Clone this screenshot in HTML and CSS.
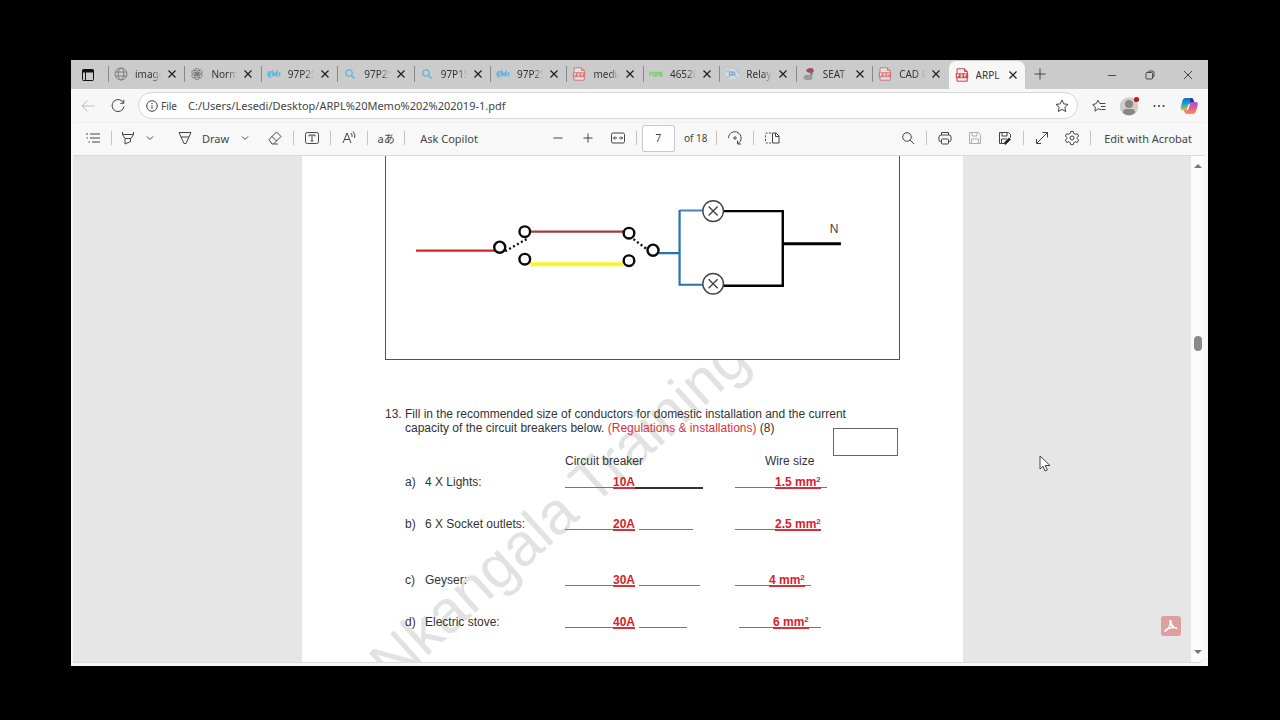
FILE: index.html
```
<!DOCTYPE html>
<html lang="en">
<head>
<meta charset="utf-8">
<title>ARPL Memo 2 2019-1.pdf</title>
<link rel="stylesheet" href="styles.css">
</head>
<body>
<svg class="sprite" aria-hidden="true">
  <symbol id="x" viewBox="0 0 10 10"><path d="M1.500 1.500l7 7M8.500 1.500l-7 7"/></symbol>
  <symbol id="chev" viewBox="0 0 10 10"><path d="M2 3.500l3 3 3-3"/></symbol>
  <symbol id="em" viewBox="0 0 14 14"><path d="M5 5H2L1 7l1 2.500h2.500M1.500 7.200H4.500M6 9.500V5l2 3 2-3v4.500M12.500 5v4.500" stroke="#62b4dc" stroke-width="1.600"/></symbol>
  <symbol id="mag" viewBox="0 0 14 14"><circle cx="6" cy="6" r="3.200" stroke="#6cb0dc" stroke-width="1.300"/><path d="M8.500 8.500l3 3" stroke="#6cb0dc" stroke-width="1.500"/></symbol>
  <symbol id="pdf" viewBox="0 0 14 14"><path d="M2 .8h7.500L12.300 3.500v9.700H2z" fill="#f5efef" stroke="#c9474a" stroke-width="1"/><path d="M9.500.8v2.700h2.800" stroke="#c9474a"/><path d="M.8 5.200h12.400v5H.8z" fill="#dc3e42" stroke="none"/><path d="M2.500 9.300V6.200h1.200v1.500H2.500M6 6.200v3h.8q1.200-1.500 0-3zM9.700 9.300V6.200h1.800M9.700 7.700h1.500" stroke="#fff" stroke-width=".8"/></symbol>
</svg>
<main class="window">
  <header class="tabbar">
    <button class="tab-actions" aria-label="Tab actions"><svg class="i14" viewBox="0 0 14 14"><rect x="1.500" y="1.500" width="11" height="11" rx="1" stroke="#111"/><path d="M1.500 3h11" stroke="#111" stroke-width="3"/><path d="M4.500 3v9.500" stroke="#111"/></svg></button>
    <nav class="tabs" aria-label="Tabs">
      <div class="tab"><svg class="fav" viewBox="0 0 14 14"><g stroke="#777" stroke-width=".9"><circle cx="7" cy="7" r="6"/><ellipse cx="7" cy="7" rx="2.800" ry="6"/><path d="M1.500 5h11M1.500 9h11"/></g></svg><button class="name">images</button><button class="close" aria-label="Close"><svg class="i10"><use href="#x"/></svg></button></div>
      <div class="tab"><svg class="fav" viewBox="0 0 14 14"><g stroke="#777" stroke-width=".8"><ellipse cx="7" cy="4.500" rx="2.500" ry="3.200"/><ellipse cx="7" cy="4.500" rx="2.500" ry="3.200" transform="rotate(60 7 7)"/><ellipse cx="7" cy="4.500" rx="2.500" ry="3.200" transform="rotate(120 7 7)"/><ellipse cx="7" cy="4.500" rx="2.500" ry="3.200" transform="rotate(180 7 7)"/><ellipse cx="7" cy="4.500" rx="2.500" ry="3.200" transform="rotate(240 7 7)"/><ellipse cx="7" cy="4.500" rx="2.500" ry="3.200" transform="rotate(300 7 7)"/></g></svg><button class="name">Norm</button><button class="close" aria-label="Close"><svg class="i10"><use href="#x"/></svg></button></div>
      <div class="tab"><svg class="fav"><use href="#em"/></svg><button class="name">97P2S</button><button class="close" aria-label="Close"><svg class="i10"><use href="#x"/></svg></button></div>
      <div class="tab"><svg class="fav"><use href="#mag"/></svg><button class="name">97P2S</button><button class="close" aria-label="Close"><svg class="i10"><use href="#x"/></svg></button></div>
      <div class="tab"><svg class="fav"><use href="#mag"/></svg><button class="name">97P1S</button><button class="close" aria-label="Close"><svg class="i10"><use href="#x"/></svg></button></div>
      <div class="tab"><svg class="fav"><use href="#em"/></svg><button class="name">97P2S</button><button class="close" aria-label="Close"><svg class="i10"><use href="#x"/></svg></button></div>
      <div class="tab"><svg class="fav dim"><use href="#pdf"/></svg><button class="name">media</button><button class="close" aria-label="Close"><svg class="i10"><use href="#x"/></svg></button></div>
      <div class="tab"><svg class="fav" viewBox="0 0 14 14"><path d="M1 9V5.500h2M4 9V5.500h2.500V9H4M7.500 9V5.500H10V9M11 9h2V7.300h-2V5.500h2" stroke="#83cf78" stroke-width="1.500"/></svg><button class="name">46528</button><button class="close" aria-label="Close"><svg class="i10"><use href="#x"/></svg></button></div>
      <div class="tab"><svg class="fav" viewBox="0 0 14 14"><rect x=".5" y="2" width="13" height="10" fill="#d3dce6" stroke="none"/><path d="M1 3l2 2 1-2M10 3h3v3M1 10.500h3l1-3M9 7l3 4" stroke="#8fb2dd"/><circle cx="6" cy="6.500" r="1.800" stroke="#7794bd"/><circle cx="8.500" cy="6.500" r="1.600" stroke="#7794bd"/></svg><button class="name">Relay:</button><button class="close" aria-label="Close"><svg class="i10"><use href="#x"/></svg></button></div>
      <div class="tab"><svg class="fav" viewBox="0 0 14 14"><g stroke="none"><path d="M4 3q3-3 7-1.500l1 3-4 1.500-3-1z" fill="#a34b5c"/><path d="M8 5l3-.5-.5 3.500-2 .5z" fill="#777"/><ellipse cx="6" cy="10.500" rx="4.500" ry="2.800" fill="#999"/></g></svg><button class="name">SEAT</button><button class="close" aria-label="Close"><svg class="i10"><use href="#x"/></svg></button></div>
      <div class="tab"><svg class="fav dim"><use href="#pdf"/></svg><button class="name">CAD D</button><button class="close" aria-label="Close"><svg class="i10"><use href="#x"/></svg></button></div>
      <div class="tab active"><svg class="fav"><use href="#pdf"/></svg><button class="name">ARPL</button><button class="close" aria-label="Close"><svg class="i10"><use href="#x"/></svg></button></div>
    </nav>
    <button class="ico" aria-label="New tab"><svg class="i14" viewBox="0 0 14 14"><path d="M7 1.500v11M1.500 7h11"/></svg></button>
    <div class="controls">
      <button aria-label="Minimize"><svg class="i10" viewBox="0 0 10 10"><path d="M1 5.500h8"/></svg></button>
      <button aria-label="Restore"><svg class="i10" viewBox="0 0 10 10"><rect x="1" y="2.500" width="6.500" height="6.500" rx="1"/><path d="M3 2.500Q3 1 4.500 1H7q2 0 2 2v3q0 1-1.300 1.300"/></svg></button>
      <button aria-label="Close window"><svg class="i10" viewBox="0 0 10 10"><path d="M1 1l8 8M9 1l-8 8"/></svg></button>
    </div>
  </header>
  <div class="addressbar">
    <button class="ico" aria-label="Back"><svg class="i14" viewBox="0 0 14 14"><path d="M13.500 7H1M6.500 1.500L1 7l5.500 5.500" stroke="#bbb"/></svg></button>
    <button class="ico" aria-label="Refresh"><svg class="i14" viewBox="0 0 14 14"><path d="M12.500 4A6 6 0 1 0 13 7.500M12.800.8v3.500H9.300"/></svg></button>
    <label class="url">
      <svg class="i12" viewBox="0 0 12 12"><circle cx="6" cy="6" r="5.300"/><path d="M6 5.300v3.500M6 3v1.200"/></svg>
      <span>File</span>
      <input type="text" value="C:/Users/Lesedi/Desktop/ARPL%20Memo%202%202019-1.pdf">
      <button class="ico" aria-label="Add favourite"><svg class="i14" viewBox="0 0 14 14"><path d="M7 1l1.800 3.900 4.200.5-3.100 2.900.8 4.200L7 10.400l-3.700 2.100.8-4.200L1 5.400l4.200-.5z"/></svg></button>
    </label>
    <button class="ico" aria-label="Favourites"><svg class="i14" viewBox="0 0 14 14"><path d="M9 10.700L6 9.800 3 12.200l.3-3.900L.8 5.500l3.400-.8L6 1.200l1.800 3.300h5.700M9 7.500h4.500M9.500 10.500h4"/></svg></button>
    <button class="ico" aria-label="Profile"><svg class="i20" viewBox="0 0 20 20"><g stroke="none"><circle cx="10" cy="10.500" r="9.300" fill="#cfcdcb"/><circle cx="10" cy="8" r="4" fill="#898785"/><path d="M4 17q0-4 3-4h6q3 0 3 4-6 4.500-12 0z" fill="#898785"/><circle cx="17.500" cy="3.500" r="2.600" fill="#c4151c"/></g></svg></button>
    <button class="ico" aria-label="More"><svg class="i14" viewBox="0 0 14 14"><g fill="#333" stroke="none"><circle cx="2.500" cy="7" r="1"/><circle cx="7" cy="7" r="1"/><circle cx="11.500" cy="7" r="1"/></g></svg></button>
    <button class="ico" aria-label="Copilot"><svg class="i20" viewBox="0 0 20 20"><defs><linearGradient id="cb" x2="0" y2="1"><stop stop-color="#1569d8"/><stop offset=".5" stop-color="#21a3c4"/><stop offset="1" stop-color="#dec83c"/></linearGradient><linearGradient id="cp" x2="0" y2="1"><stop stop-color="#9a58e5"/><stop offset=".5" stop-color="#ec5790"/><stop offset="1" stop-color="#f7944a"/></linearGradient></defs><g stroke="none"><path d="M6 2h6q2 0 2.500 2L15 6h-2q-1.500 0-2 2l-1.500 5q-.5 1.500-2 1.500H4q-3 0-2.300-3L3.500 4.500Q4.200 2 6 2z" fill="url(#cb)"/><path d="M14 18H8q-2 0-2.500-2L5 14h2.500q1.500 0 2-1.500L11 7.500Q11.500 6 13 6h3.500q3 0 2.200 3l-1.800 6.500Q16 18 14 18z" fill="url(#cp)"/><path d="M11.500 2Q14 2 14.500 4l.5 2h-2q-1.500 0-2 2z" fill="#173d8c"/><path d="M11 7.500L9.500 12.700q-.5 1.800-2 1.800l1.500-5Q9.500 7.500 11 7.500z" fill="#f7f7f7"/></g></svg></button>
  </div>
  <div class="toolbar">
    <div class="group left">
      <button class="ico" aria-label="Contents"><svg class="i16" viewBox="0 0 16 16"><path d="M5 4h10M5 8h10M7 12h8M1 4h2M1.500 8h1.500M3.500 12H5"/></svg></button><i></i>
      <button class="ico marker" aria-label="Highlight"><svg class="i16" viewBox="0 0 16 16"><path d="M2.500 2v2.500l2.500 4h6l2.500-4V2M2.500 4.500h11M5 8.500V14l5.500-2.500v-3"/></svg></button>
      <button class="more" aria-label="Highlight options"><svg class="i10"><use href="#chev"/></svg></button>
      <button class="draw"><svg class="i16" viewBox="0 0 16 16"><path d="M2 2.500h12L9 13.500H7zM4 7h8"/></svg>Draw</button>
      <button class="more" aria-label="Draw options"><svg class="i10"><use href="#chev"/></svg></button>
      <button class="ico eraser" aria-label="Erase"><svg class="i16" viewBox="0 0 16 16"><path d="M2 9.500L9.500 2l4.500 4.500-7.500 7.500H5zM5 6.500l4.500 4.500M6.500 14H11"/></svg></button><i></i>
      <button class="ico" aria-label="Add text"><svg class="i16" viewBox="0 0 16 16"><rect x="1.500" y="2.500" width="13" height="11" rx="2"/><path d="M5 6.500V5h6v1.500M8 5v6M6.500 11h3"/></svg></button><i></i>
      <button class="ico" aria-label="Read aloud"><svg class="i16" viewBox="0 0 16 16"><path d="M2 13L6 3l4 10M3.500 9.500h5M10 3q1.500 1.500 1 4M12 1.500q3 3 1.500 6.500"/></svg></button><i></i>
      <button class="ico lang" aria-label="Translate">aあ</button><i></i>
      <button class="text">Ask Copilot</button>
    </div>
    <div class="group">
      <button class="ico" aria-label="Zoom out"><svg class="i14" viewBox="0 0 14 14"><path d="M2.500 7h9"/></svg></button>
      <button class="ico" aria-label="Zoom in"><svg class="i14" viewBox="0 0 14 14"><path d="M7 2.500v9M2.500 7h9"/></svg></button>
      <button class="ico" aria-label="Fit to width"><svg class="i16" viewBox="0 0 16 16"><rect x="1.500" y="3" width="13" height="10" rx="1.500"/><path d="M3.500 8h3.500M9 8h3.500M5 6.500L3.500 8 5 9.500M11 6.500L12.500 8 11 9.500"/></svg></button><i></i>
      <input class="pageno" type="text" value="7" aria-label="Page"><span class="of">of 18</span><i></i>
      <button class="ico" aria-label="Rotate"><svg class="i16" viewBox="0 0 16 16"><path d="M1.500 8a6.300 6.300 0 1 1 9.500 5.500M10.500 10.500V14H14"/><circle cx="8" cy="8" r="1.200"/></svg></button><i></i>
      <button class="ico" aria-label="Page view"><svg class="i16" viewBox="0 0 16 16"><path d="M8.500 3h3.500l3 3v7H8.500zM11.500 3v3.500H15"/><path d="M7 3H3Q1.500 3 1.500 4.500v7Q1.500 13 3 13h4" stroke-dasharray="2 1.500"/></svg></button>
    </div>
    <div class="group right">
      <button class="ico" aria-label="Find"><svg class="i14" viewBox="0 0 14 14"><circle cx="6" cy="6" r="4.300"/><path d="M9 9l4 4"/></svg></button><i></i>
      <button class="ico" aria-label="Print"><svg class="i14" viewBox="0 0 14 14"><path d="M3.500 4V1.500h7V4M3.500 10.500h-1Q1 10.500 1 9V6q0-2 2-2h8q2 0 2 2v3q0 1.500-1.500 1.500h-1"/><rect x="3.500" y="8" width="7" height="5" rx="1"/></svg></button>
      <button class="ico faint" aria-label="Save"><svg class="i14" viewBox="0 0 14 14"><path d="M1.500 1.500h9l2 2v9h-11zM4 1.500V5h5V1.500M3.500 12.500V8h7v4.500"/></svg></button>
      <button class="ico" aria-label="Save as"><svg class="i14" viewBox="0 0 14 14"><path d="M6 12.500H1.500v-11h9l2 2v3M4 1.500V5h5V1.500M3.500 12.500V8H9"/><path d="M6.500 13l5.500-5.500" stroke="#222" stroke-width="2.500"/></svg></button><i></i>
      <button class="ico" aria-label="Full screen"><svg class="i14" viewBox="0 0 14 14"><path d="M2 12L12.500 1.500M7.500 1.500h5v5M1.500 8v4.500h4.500"/></svg></button>
      <button class="ico" aria-label="Settings"><svg class="i16" viewBox="0 0 16 16"><path d="M6.700 1.500h2.600l.5 2 1.500.8 2-.6 1.300 2.300L13.200 7.500v1.200l1.400 1.400-1.300 2.300-2-.6-1.500.9-.5 1.900H6.700l-.5-1.900-1.500-.9-2 .6-1.300-2.300 1.400-1.400V7.500L1.400 6l1.300-2.300 2 .6 1.500-.8z"/><circle cx="8" cy="8" r="2"/></svg></button><i></i>
      <button class="text">Edit with Acrobat</button>
    </div>
  </div>
  <section class="viewer">
    <div class="canvas">
      <article class="page">
        <svg class="watermark" viewBox="0 0 661 507"><text transform="translate(91 531) rotate(-42)">Nkangala Training</text></svg>
        <figure class="circuit">
          <svg viewBox="0 0 512 203">
            <path d="M30 94.500h80" stroke="#d42428" stroke-width="2.200"/>
            <path d="M144 75.500h93" stroke="#a23a3e" stroke-width="2.200"/>
            <path d="M144 108h93" stroke="#f6f62c" stroke-width="4"/>
            <path d="M119 95l23-13M247 83l16 12" stroke="#111" stroke-width="2.400" stroke-dasharray="2 2.500"/>
            <path d="M293 54.500h23" stroke="#4c80b8" stroke-width="2"/>
            <path d="M272 97h21M293 54v74.500h23" stroke="#2872ae" stroke-width="2.200"/>
            <path d="M336 55h60v74.500h-60" stroke="#000" stroke-width="2.400"/><path d="M396 87.500h58" stroke="#000" stroke-width="3"/>
            <g fill="#fff" stroke="#0a0a0a" stroke-width="2.400"><circle cx="113.500" cy="91" r="5.500"/><circle cx="138.500" cy="75.500" r="5.300"/><circle cx="138.500" cy="103" r="5.300"/><circle cx="242.500" cy="77" r="5.300"/><circle cx="242.500" cy="104.500" r="5.300"/><circle cx="266.500" cy="94" r="5.500"/></g>
            <g fill="#fff" stroke="#444" stroke-width="1.400"><circle cx="326.500" cy="55" r="10.300"/><circle cx="326.500" cy="127.500" r="10.300"/><path d="M322 50.500l9 9M331 50.500l-9 9M322 123l9 9M331 123l-9 9"/></g>
            <text x="443" y="77">N</text>
          </svg>
        </figure>
        <section class="question">
          <span class="num">13.</span>
          <p>Fill in the recommended size of conductors for domestic installation and the current capacity of the circuit breakers below. <em>(Regulations &amp; installations)</em> (8)</p>
          <span class="score"></span>
        </section>
        <table class="answers">
          <thead><tr><th></th><th></th><th>Circuit breaker</th><th class="wire">Wire size</th></tr></thead>
          <tbody>
            <tr><td>a)</td><td>4 X Lights:</td><td><div class="blank"><u class="w48"></u><b>10A</b><u class="w68 dark"></u></div></td><td><div class="blank"><u class="w40"></u><b>1.5 mm<sup>2</sup></b><u class="w6"></u></div></td></tr>
            <tr class="tall"><td>b)</td><td>6 X Socket outlets:</td><td><div class="blank"><u class="w48"></u><b>20A</b><u class="w54 gap"></u></div></td><td><div class="blank"><u class="w40"></u><b>2.5 mm<sup>2</sup></b></div></td></tr>
            <tr><td>c)</td><td>Geyser:</td><td><div class="blank"><u class="w48"></u><b>30A</b><u class="w61 gap"></u></div></td><td><div class="blank"><u class="w34"></u><b>4 mm<sup>2</sup></b><u class="w6"></u></div></td></tr>
            <tr><td>d)</td><td>Electric stove:</td><td><div class="blank"><u class="w48"></u><b>40A</b><u class="w48 gap"></u></div></td><td><div class="blank shift"><u class="w34"></u><b>6 mm<sup>2</sup></b><u class="w12"></u></div></td></tr>
          </tbody>
        </table>
      </article>
      <button class="acrobat" aria-label="Open in Acrobat"><svg class="i20" viewBox="0 0 20 20"><path d="M4 15.500q4.500-2.500 6-11M4 15.500q-.5-2 4-3.200 5-1.300 8-.3M10 4.500q-1 4.500 6 8.500M10 4.500q-1-.5-1 1 0 4 4 6.500" stroke="#fff" stroke-width="1.300"/></svg></button>
    </div>
    <div class="scrollbar"><svg class="arrow" viewBox="0 0 8 6"><path d="M4 1l4 4H0z"/></svg><span class="thumb"></span><svg class="arrow" viewBox="0 0 8 6"><path d="M0 1h8L4 5z"/></svg></div>
  </section>
  <svg class="pointer" viewBox="0 0 12 18"><path d="M1 1v13l3-2.700 2 4.700 2.300-1-2-4.500H11z" fill="#fff" stroke="#444"/></svg>
</main>
</body>
</html>
```
FILE: styles.css
```
* { box-sizing: border-box; }
body {
  margin: 0;
  height: 100vh;
  padding: 60px 72px 54px 71px;
  background: #000;
  font-family: "Noto Sans", "Open Sans", sans-serif;
  font-size: 11px;
  color: #444;
}
button, input { font: inherit; color: inherit; border: 0; padding: 0; background: none; }
svg { fill: none; stroke: #444; stroke-width: 1; flex: none; display: block; }
.sprite { position: absolute; width: 0; height: 0; }
.i10 { width: 10px; height: 10px; }
.i12 { width: 12px; height: 12px; }
.i14, .fav { width: 14px; height: 14px; }
.i16 { width: 16px; height: 16px; }
.i20 { width: 20px; height: 20px; }
.ico { width: 30px; height: 28px; flex: none; display: grid; place-items: center; }

.window { position: relative; height: 100%; display: flex; flex-direction: column; background: #f7f7f7; overflow: hidden; }

.tabbar { display: flex; height: 29px; flex: none; background: #cbcbcb; }
.tab-actions { width: 37px; padding-left: 10px; }
.tabs { flex: 1; display: grid; grid-template-columns: repeat(12, minmax(0, 1fr)); }
.tab { position: relative; display: flex; align-items: center; padding: 0 0 1px 6px; }
.tab::before { content: ""; position: absolute; left: 0; top: 6px; height: 16px; width: 1px; background: #888; }
.tab.active { background: #f7f7f7; border-radius: 7px 7px 0 0; margin-top: 1px; }
.tab.active::before { display: none; }
.dim { opacity: .6; }
.name {
  width: 26px;
  margin-left: 7px;
  overflow: hidden;
  text-align: left;
  white-space: nowrap;
  font-size: 10px;
  color: #333;
  -webkit-mask-image: linear-gradient(90deg, #000 65%, transparent);
  mask-image: linear-gradient(90deg, #000 65%, transparent);
}
.active .name { -webkit-mask-image: none; mask-image: none; }
.close { margin-left: 6px; }
.close svg { stroke: #222; stroke-width: 1.3; }
.controls { display: flex; margin-left: 38px; margin-right: 1px; }
.controls button { width: 38px; display: grid; place-items: center; }

.addressbar { display: flex; align-items: center; height: 33px; flex: none; padding: 0 4px 0 2px; }
.url { flex: 1; display: flex; align-items: center; height: 27px; margin: 0 6px 0 5px; padding-left: 7px; background: #fff; border: 1px solid #d6d6d6; border-radius: 14px; }
.url span { margin-left: 3px; font-size: 10px; }
.url input { flex: 1; margin-left: 11px; outline: 0; }

.toolbar { display: flex; align-items: center; height: 34px; flex: none; margin: 0 3px; padding: 0 13px 2px 4px; background: #f8f8f8; border-bottom: 1px solid #d8d8d8; border-top: 1px solid #efefef; }
.group { display: flex; align-items: center; }
.group i { width: 1px; height: 14px; margin: 0 3px; background: #c4c4c4; }
.left { margin-right: 65px; }
.right { margin-left: auto; }
.marker { width: 26px; }
.more { width: 18px; display: grid; place-items: center; }
.draw { display: flex; align-items: center; gap: 9px; margin-left: 18px; margin-right: 7px; }
.eraser { margin-left: 6px; }
.lang { font-size: 11px; font-family: "Noto Sans", "Noto Sans CJK JP", sans-serif; white-space: nowrap; }
.text { margin-left: 12px; white-space: nowrap; }
.right .text { margin-left: 10px; }
.pageno { width: 33px; height: 27px; margin-left: 2px; text-align: center; background: #fff; border: 1px solid #c8c8c8; border-radius: 2px; font-size: 10px; }
.of { margin: 0 6px 0 9px; font-size: 10px; }
.faint { opacity: .4; }

.viewer { flex: 1; min-height: 0; display: flex; margin: 0 4px 3px 2px; border-bottom: 1px solid #ddd; border-radius: 0 0 7px 0; overflow: hidden; }
.canvas { position: relative; flex: 1; display: flex; justify-content: center; padding-left: 1px; background: #e6e6e6; overflow: hidden; }
.page { position: relative; width: 100%; max-width: 661px; padding: 0 63px 0 83px; background: #fff; font-family: "Liberation Sans", Arial, sans-serif; font-size: 12px; line-height: 14px; color: #333; }
.watermark { position: absolute; inset: 0; width: 100%; stroke: none; fill: #e2e2e2; }
.watermark text { font-size: 60px; }
.circuit { position: relative; margin: 0; background: #fff; border: 1px solid #555; border-top: 0; }
.circuit svg { width: 100%; }
.circuit text { font-size: 12px; fill: #444; stroke: none; }
.question { position: relative; display: flex; margin-top: 47px; }
.num { width: 20px; flex: none; }
.question p { margin: 0; max-width: 460px; }
.question em { font-style: normal; color: #dd3038; }
.score { position: absolute; right: 2px; top: 21px; width: 65px; height: 28px; border: 1px solid #666; }
.answers { position: relative; margin: 19px 0 0 20px; border-collapse: collapse; table-layout: fixed; width: 450px; }
.answers th, .answers td { padding: 0; text-align: left; font-weight: normal; vertical-align: top; white-space: nowrap; }
.answers th:nth-child(1) { width: 20px; }
.answers th:nth-child(2) { width: 140px; }
.answers th:nth-child(3) { width: 170px; }
.answers .wire { padding-left: 30px; }
.answers thead tr { height: 21px; }
.answers tbody tr { height: 42px; }
.answers tbody .tall { height: 56px; }
.blank { display: flex; height: 14px; }
.blank b { color: #dc2028; border-bottom: 2px solid #dc3038; height: 14px; line-height: 14px; }
.blank u { height: 13px; border-bottom: 1px solid #777; }
.blank .dark { height: 14px; border-bottom: 2px solid #333; }
.gap { margin-left: 4px; }
.shift { margin-left: 4px; }
.w6 { width: 6px; }
.w12 { width: 12px; }
.w34 { width: 34px; }
.w40 { width: 40px; }
.w48 { width: 48px; }
.w54 { width: 54px; }
.w61 { width: 61px; }
.w68 { width: 68px; }
sup { font-size: 8px; line-height: 0; vertical-align: 4px; }
.acrobat { position: absolute; right: 10px; bottom: 26px; width: 20px; height: 20px; background: #dda09f; border-radius: 3px; }
.scrollbar { width: 13px; display: flex; flex-direction: column; align-items: center; padding: 7px 0; background: #fcfcfc; }
.arrow { width: 8px; height: 6px; fill: #777; stroke: none; }
.thumb { width: 8px; height: 15px; margin: 167px 0 auto; border-radius: 4px; background: #8a8a8a; }
.pointer { position: absolute; left: 968px; top: 395px; width: 12px; height: 18px; }
```
